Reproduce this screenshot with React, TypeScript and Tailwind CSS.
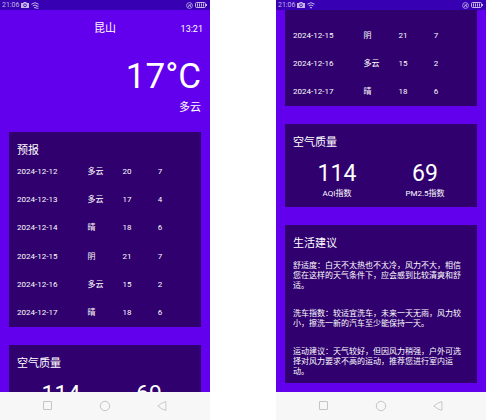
import type { ReactNode } from 'react';

type Day = { date: string; sky: string; high: number; low: number };

const days: Day[] = [
  { date: '2024-12-12', sky: '多云', high: 20, low: 7 },
  { date: '2024-12-13', sky: '多云', high: 17, low: 4 },
  { date: '2024-12-14', sky: '晴', high: 18, low: 6 },
  { date: '2024-12-15', sky: '阴', high: 21, low: 7 },
  { date: '2024-12-16', sky: '多云', high: 15, low: 2 },
  { date: '2024-12-17', sky: '晴', high: 18, low: 6 },
];

const tips = [
  '舒适度：白天不太热也不太冷，风力不大，相信您在这样的天气条件下，应会感到比较清爽和舒适。',
  '洗车指数：较适宜洗车，未来一天无雨，风力较小，擦洗一新的汽车至少能保持一天。',
  '运动建议：天气较好，但因风力稍强，户外可选择对风力要求不高的运动，推荐您进行室内运动。',
];

function StatusBar({ muted = false }: { muted?: boolean }) {
  return (
    <header className="flex h-[10px] shrink-0 items-center gap-[2px] bg-[#3700b3] pr-[3px] pl-[2px] text-[7px] leading-[10px] text-[#c5b6e8]">
      <span>21:06</span>
      <svg width="8" height="6" viewBox="0 0 8 6" aria-hidden="true">
        <path d="M0 1h2l1-1h2l1 1h2v5H0z" fill="currentColor" />
        <circle cx="4" cy="3.3" r="1.4" fill="none" stroke="#3700b3" strokeWidth="0.8" />
      </svg>
      <svg width="8" height="7" viewBox="0 0 8 7" fill="none" stroke="currentColor" aria-hidden="true">
        <path d="M0.4 2.2Q4 -0.8 7.6 2.2" />
        <path d="M1.8 3.9Q4 2 6.2 3.9" />
        <path d="M3.2 5.2L4 6.2l0.8-1" fill="currentColor" />
        {muted && <path d="M5 4.2h2.6M5 6.2h2.6" strokeWidth="0.9" />}
      </svg>
      <svg className="ml-auto" width="7" height="7" viewBox="0 0 7 7" fill="none" stroke="currentColor" strokeWidth="0.8" aria-hidden="true">
        <circle cx="3.5" cy="3.5" r="2.9" />
        <path d="M2 5L4.8 2M2.4 3.2h2v1.8" />
      </svg>
      <svg width="12" height="6" viewBox="0 0 12 6" fill="none" stroke="currentColor" aria-hidden="true">
        <rect x="0.5" y="0.5" width="10" height="5" rx="1.2" />
        <path d="M2.5 1.4v3.2M4.5 1.4v3.2M6.5 1.4v3.2M8.5 1.4v3.2" />
        <path d="M11.5 2v2" />
      </svg>
    </header>
  );
}

function NavBar() {
  const button = 'flex h-[28px] flex-1 items-center justify-center text-[#c4c4c4]';
  return (
    <nav className="flex h-[28px] shrink-0 bg-[#f7f7f7] px-[19px]">
      <button type="button" aria-label="最近任务" className={button}>
        <svg width="10" height="10" viewBox="0 0 10 10" fill="none" stroke="currentColor">
          <rect x="0.5" y="0.5" width="8" height="8" rx="0.3" />
        </svg>
      </button>
      <button type="button" aria-label="主屏幕" className={button}>
        <svg width="12" height="12" viewBox="0 0 12 12" fill="none" stroke="currentColor">
          <circle cx="6" cy="6" r="4.7" />
        </svg>
      </button>
      <button type="button" aria-label="返回" className={button}>
        <svg width="10" height="10" viewBox="0 0 10 10" fill="none" stroke="currentColor" strokeWidth="0.9" strokeLinejoin="round">
          <path d="M8.9 0.6v8.8Q5 8.6 0.8 5Q5 1.4 8.9 0.6z" />
        </svg>
      </button>
    </nav>
  );
}

function Phone({ muted, children }: { muted?: boolean; children: ReactNode }) {
  return (
    <section className="flex h-screen min-w-0 flex-1 flex-col bg-[#6200ee] text-white">
      <StatusBar muted={muted} />
      <div className="min-h-0 flex-1 overflow-hidden px-[9px]">{children}</div>
      <NavBar />
    </section>
  );
}

function Card({ title, children }: { title: string; children: ReactNode }) {
  return (
    <article className="mt-[18px] bg-[#2f006e] px-[8px] pt-[12px]">
      <h2 className="text-[11px] leading-[14px]">{title}</h2>
      {children}
    </article>
  );
}

function Forecast({ rows, height }: { rows: Day[]; height: string }) {
  return (
    <table className={`w-full table-fixed text-left text-[8px] leading-[10px] ${height}`}>
      <colgroup>
        <col className="w-[40%]" />
        <col className="w-[20%]" />
        <col className="w-[20%]" />
        <col className="w-[20%]" />
      </colgroup>
      <tbody>
        {rows.map((d) => (
          <tr key={d.date}>
            <td>{d.date}</td>
            <td>{d.sky}</td>
            <td>{d.high}</td>
            <td>{d.low}</td>
          </tr>
        ))}
      </tbody>
    </table>
  );
}

function Metric({ value, label }: { value: number; label?: string }) {
  return (
    <div className="text-center">
      <p className="text-[23px] leading-[28px]">{value}</p>
      {label && <p className="text-[8px] leading-[12px]">{label}</p>}
    </div>
  );
}

export default function App() {
  return (
    <main className="flex gap-[66px] bg-white pr-px font-['Roboto','Noto_Sans_CJK_SC',sans-serif]">
      <Phone muted>
        <div className="-mx-[2px] grid grid-cols-3 items-center pt-[10px] leading-[18px]">
          <h1 className="col-start-2 text-center text-[11px]">昆山</h1>
          <time className="text-right text-[9px]">13:21</time>
        </div>
        <p className="mt-[18px] text-right text-[35px] leading-[42px]">17°C</p>
        <p className="mt-[4px] text-right text-[11px] leading-[12px]">多云</p>
        <Card title="预报">
          <Forecast rows={days} height="h-[169px]" />
        </Card>
        <Card title="空气质量">
          <div className="grid grid-cols-2 pt-[10px]">
            <Metric value={114} />
            <Metric value={69} />
          </div>
        </Card>
      </Phone>

      <Phone>
        <div className="bg-[#2f006e] px-[8px] pt-[12px]">
          <Forecast rows={days.slice(3)} height="h-[84px]" />
        </div>
        <Card title="空气质量">
          <div className="grid grid-cols-2 pt-[10px] pb-[7px]">
            <Metric value={114} label="AQI指数" />
            <Metric value={69} label="PM2.5指数" />
          </div>
        </Card>
        <Card title="生活建议">
          <div className="flex flex-col gap-[18px] pt-[10px] pr-[4px] pb-[6px] text-[8px] leading-[10px]">
            {tips.map((tip) => (
              <p key={tip}>{tip}</p>
            ))}
          </div>
        </Card>
      </Phone>
    </main>
  );
}
